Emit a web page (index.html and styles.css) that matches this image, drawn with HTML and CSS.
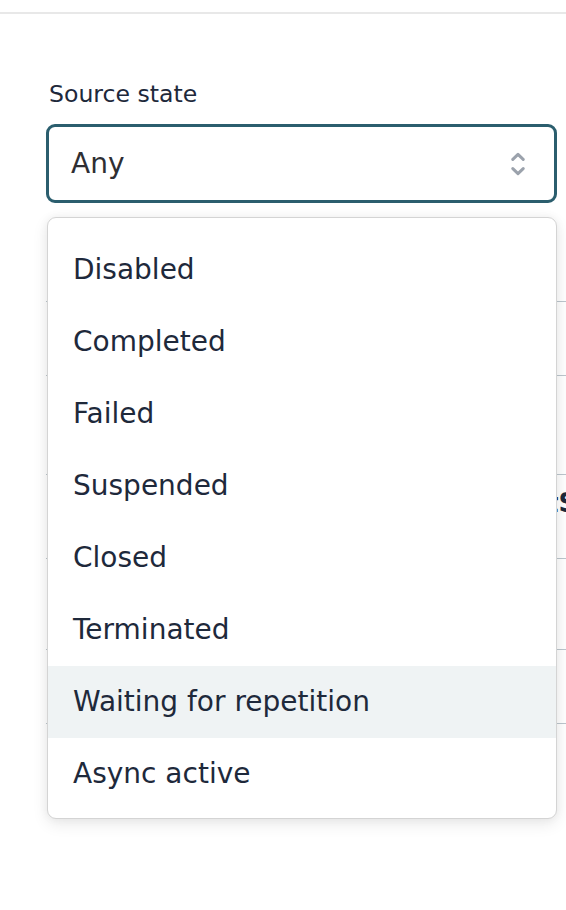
FILE: index.html
```html
<!DOCTYPE html>
<html lang="en">
<head>
<meta charset="utf-8">
<title>Source state</title>
<link rel="stylesheet" href="styles.css">
</head>
<body>
<div class="topbar"></div>
<main class="panel">
  <div class="field">
    <label class="label">Source state</label>
    <div class="select-wrap">
      <div class="select">
        <span class="select-value">Any</span>
        <svg class="chevrons" width="14" height="24" viewBox="0 0 14 24" aria-hidden="true">
          <path d="M1.8 7.4 L7 2.4 L12.2 7.4" />
          <path d="M1.8 16.6 L7 21.6 L12.2 16.6" />
        </svg>
      </div>
      <ul class="menu">
        <li class="option">Disabled</li>
        <li class="option">Completed</li>
        <li class="option">Failed</li>
        <li class="option">Suspended</li>
        <li class="option">Closed</li>
        <li class="option">Terminated</li>
        <li class="option active">Waiting for repetition</li>
        <li class="option">Async active</li>
      </ul>
    </div>
  </div>
  <div class="table-clip">
    <div class="table">
      <div class="row r0"></div>
      <div class="row r1"></div>
      <div class="row r2"></div>
      <div class="row r3"><span class="cell-gap"></span><span class="cell-head">tStatus</span></div>
      <div class="row r4"></div>
      <div class="row r5"></div>
    </div>
  </div>
</main>
</body>
</html>
```
FILE: styles.css
```css
html, body {
  margin: 0;
  padding: 0;
  background: #ffffff;
}

body {
  min-height: 100vh;
  font-family: "DejaVu Sans", "Liberation Sans", sans-serif;
  color: #1e293b;
}

.topbar {
  height: 12px;
  border-bottom: 2px solid #e8e8e8;
}

.panel {
  padding: 66px 9px 0 46px;
}

.field {
  display: flex;
  flex-direction: column;
}

.label {
  font-size: 23.6px;
  line-height: 28px;
  color: #1e293b;
  padding-left: 3px;
  margin-bottom: 16px;
}

.select-wrap {
  position: relative;
}

.select {
  box-sizing: border-box;
  height: 79px;
  border: 3px solid #2b5e6e;
  border-radius: 9px;
  display: flex;
  align-items: center;
  padding: 0 29px 0 22px;
  background: #ffffff;
}

.select-value {
  font-size: 28px;
  line-height: 34px;
  color: #2e2e33;
  flex: 1;
}

.chevrons {
  display: block;
  fill: none;
  stroke: #9ba2ac;
  stroke-width: 3;
  stroke-linecap: round;
  stroke-linejoin: round;
}

.menu {
  position: absolute;
  z-index: 2;
  top: calc(100% + 14px);
  left: 1px;
  right: 0;
  box-sizing: border-box;
  margin: 0;
  padding: 16px 0 8px;
  list-style: none;
  background: #ffffff;
  border: 1px solid #d4d4d4;
  border-radius: 9px;
  box-shadow: 0 5px 16px rgba(0, 0, 0, 0.09), 0 0 10px rgba(0, 0, 0, 0.05);
}

.option {
  height: 72px;
  display: flex;
  align-items: center;
  padding-left: 25px;
  font-size: 28px;
  line-height: 34px;
  color: #1e293b;
}

.option.active {
  background: #eff3f4;
}

.table-clip {
  margin-top: 24px;
  margin-right: -9px;
  overflow: hidden;
}

.table {
  width: 760px;
}

.row {
  box-sizing: border-box;
  border-bottom: 1px solid #bcc6cd;
  display: flex;
  align-items: flex-start;
}

.r0 { height: 75px; }
.r1 { height: 74px; }
.r2 { height: 99px; }
.r3 { height: 84px; padding-top: 13px; }
.r4 { height: 91px; }
.r5 { height: 74px; }

.cell-gap {
  width: 500px;
  flex: none;
}

.cell-head {
  font-size: 26px;
  line-height: 30px;
  font-weight: 700;
  color: #1e293b;
}
```
